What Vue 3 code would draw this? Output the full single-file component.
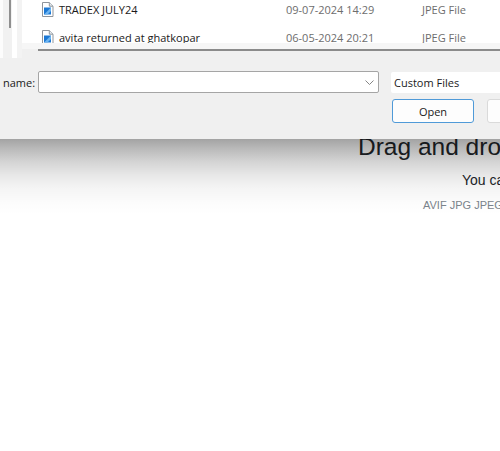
<script setup>
const rows = [
  { name: 'TRADEX JULY24', date: '09-07-2024 14:29', type: 'JPEG File' },
  { name: 'avita returned at ghatkopar', date: '06-05-2024 20:21', type: 'JPEG File' },
]
</script>

<template>
  <main class="page">
    <section class="upload">
      <h2 class="drop-title">Drag and drop</h2>
      <p class="drop-sub">You can</p>
      <p class="drop-types">AVIF JPG JPEG</p>
    </section>
    <div class="shade"></div>
    <div class="dialog">
      <div class="browser">
        <div class="side">
          <div class="track"><div class="thumb"></div></div>
          <div class="gap"></div>
          <div class="edge"></div>
        </div>
        <div class="files">
          <div class="list">
            <div class="rows">
              <div v-for="row in rows" :key="row.name" class="row">
                <svg class="icon" viewBox="0 0 13 15" width="13" height="15">
                  <path d="M1.500.500h6.800l3.700 3.700v10.300h-10.500z" fill="#fff" stroke="#8f959c"/>
                  <path d="M8.300.500v3.700h3.700" fill="#e6ebf0" stroke="#8f959c"/>
                  <rect x="3" y="5.500" width="7" height="7" fill="#1c78d4"/>
                  <path d="M3 12.500l7-7v3.500l-3.500 3.500z" fill="#6db4f0"/>
                </svg>
                <span class="name">{{ row.name }}</span>
                <span class="date">{{ row.date }}</span>
                <span class="type">{{ row.type }}</span>
              </div>
            </div>
          </div>
          <div class="rule-band"><div class="rule"></div></div>
        </div>
      </div>
      <div class="form">
        <div class="line">
          <label class="label">name:</label>
          <div class="combo">
            <svg class="chevron" viewBox="0 0 9 5" width="9" height="5">
              <path d="M.500.500l4 4 4-4" fill="none" stroke="#858585"/>
            </svg>
          </div>
          <div class="filter">Custom Files</div>
        </div>
        <div class="actions">
          <button class="btn primary">Open</button>
          <button class="btn"></button>
        </div>
      </div>
    </div>
  </main>
</template>

<style>
html, body { margin: 0; background: #fff; overflow: hidden; }
</style>

<style scoped>
.page {
  position: relative;
  width: 500px;
  height: 451px;
  overflow: hidden;
  background: #fff;
  font-family: "Open Sans", "Noto Sans", sans-serif;
}
.upload {
  padding: 133px 0 0 358px;
  white-space: nowrap;
  font-family: "Liberation Sans", Arial, sans-serif;
}
.drop-title { margin: 0; font-size: 24.500px; font-weight: 400; line-height: 28px; color: #212529; }
.drop-sub { margin: 11px 0 0 104px; font-size: 14px; line-height: 16px; color: #212529; }
.drop-types { margin: 10px 0 0 65px; font-size: 11px; line-height: 14px; color: #7b848c; }
.shade {
  position: absolute;
  left: 0;
  top: 139px;
  width: 100%;
  height: 76px;
  background: linear-gradient(to bottom,
    rgba(0, 0, 0, .36) 0,
    rgba(0, 0, 0, .27) 13%,
    rgba(0, 0, 0, .17) 30%,
    rgba(0, 0, 0, .09) 48%,
    rgba(0, 0, 0, .04) 66%,
    rgba(0, 0, 0, .012) 84%,
    rgba(0, 0, 0, 0) 100%);
}
.dialog {
  position: absolute;
  left: 0;
  top: 0;
  width: 100%;
  height: 139px;
  background: #f0f0f0;
  display: flex;
  flex-direction: column;
}
.browser { display: flex; height: 58px; flex: none; }
.side { width: 22px; flex: none; display: flex; padding-left: 3px; box-sizing: border-box; background: #fcfcfc; }
.track { width: 9px; background: #f1f1f1; display: flex; justify-content: flex-end; padding-right: 1px; box-sizing: border-box; }
.thumb { width: 2px; height: 28px; background: #8f8f8f; }
.gap { width: 5px; background: #fff; }
.edge { width: 5px; background: #f3f3f3; }
.files { flex: 1; display: flex; flex-direction: column; min-width: 0; background: #fff; }
.list { height: 43px; overflow: hidden; flex: none; }
.rows { margin-top: -5px; }
.row { display: flex; align-items: center; height: 28px; font-size: 11px; color: #1a1a1a; }
.icon { margin-left: 19px; flex: none; }
.name { margin-left: 5px; width: 227px; white-space: nowrap; flex: none; }
.date { width: 136px; flex: none; color: #6d6d6d; }
.type { color: #6d6d6d; }
.rule-band { flex: 1; background: #f0f0f0; display: flex; flex-direction: column; }
.rule-band::before { content: ""; height: 6px; background: #f6f6f6; }
.rule { margin-left: 16px; height: 2px; background: #8b8b8b; }
.form { flex: 1; display: flex; flex-direction: column; padding: 13px 0 0 3px; font-size: 11px; color: #1a1a1a; }
.line { display: flex; align-items: center; white-space: nowrap; }
.label { width: 35px; flex: none; }
.combo {
  width: 341px;
  height: 22px;
  flex: none;
  box-sizing: border-box;
  background: #fff;
  border: 1px solid #a5a5a5;
  border-radius: 2px;
  display: flex;
  align-items: center;
  justify-content: flex-end;
  padding-right: 4px;
}
.filter { margin-left: 12px; flex: 1; height: 21px; line-height: 21px; background: #fff; padding-left: 3px; border-radius: 2px 0 0 2px; }
.actions { display: flex; gap: 13px; margin: 6px 0 0 389px; }
.btn { width: 82px; height: 24px; flex: none; box-sizing: border-box; border: 1px solid #dadada; border-radius: 3px; background: #fdfdfd; font: 11px "Open Sans", sans-serif; color: #1a1a1a; padding: 0; }
.btn.primary { border-color: #4f9ad8; }
</style>
